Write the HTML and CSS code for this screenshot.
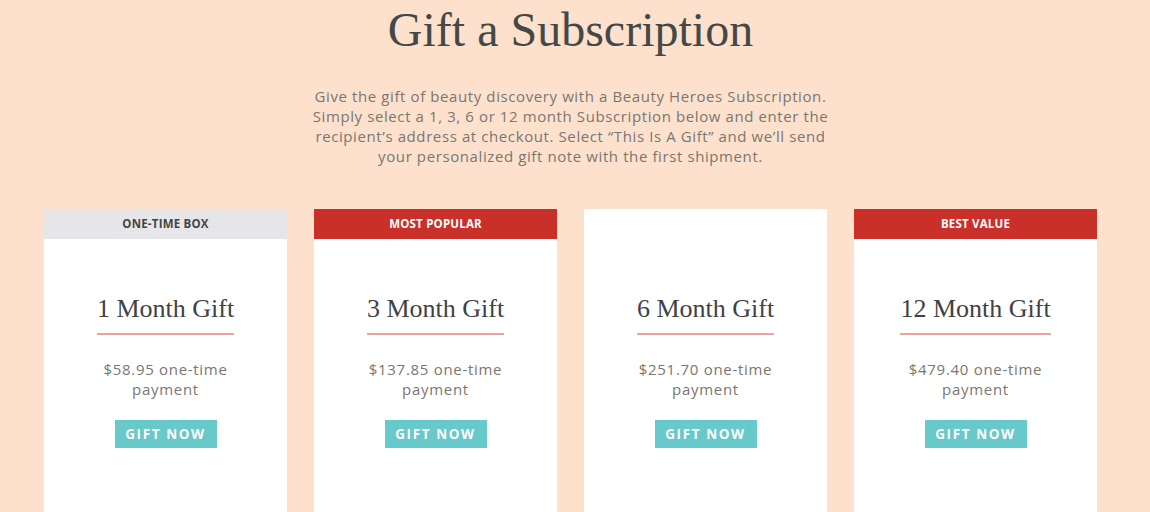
FILE: index.html
```html
<!DOCTYPE html>
<html lang="en">
<head>
<meta charset="UTF-8">
<title>Gift a Subscription</title>
<link rel="stylesheet" href="styles.css">
</head>
<body>
<div class="page">
  <h1 class="title">Gift a Subscription</h1>
  <p class="intro">Give the gift of beauty discovery with a Beauty Heroes Subscription. Simply select a 1, 3, 6 or 12 month Subscription below and enter the recipient’s address at checkout. Select “This Is A Gift” and we’ll send your personalized gift note with the first shipment.</p>

  <div class="plans">
    <div class="plan">
      <div class="tag tag-grey">ONE-TIME BOX</div>
      <div class="plan-body">
        <h3 class="plan-name">1 Month Gift</h3>
        <p class="price">$58.95 one-time payment</p>
        <a class="btn" href="#">GIFT NOW</a>
      </div>
    </div>
    <div class="plan">
      <div class="tag tag-red">MOST POPULAR</div>
      <div class="plan-body">
        <h3 class="plan-name">3 Month Gift</h3>
        <p class="price">$137.85 one-time payment</p>
        <a class="btn" href="#">GIFT NOW</a>
      </div>
    </div>
    <div class="plan">
      <div class="tag tag-none"></div>
      <div class="plan-body">
        <h3 class="plan-name">6 Month Gift</h3>
        <p class="price">$251.70 one-time payment</p>
        <a class="btn" href="#">GIFT NOW</a>
      </div>
    </div>
    <div class="plan">
      <div class="tag tag-red">BEST VALUE</div>
      <div class="plan-body">
        <h3 class="plan-name">12 Month Gift</h3>
        <p class="price">$479.40 one-time payment</p>
        <a class="btn" href="#">GIFT NOW</a>
      </div>
    </div>
  </div>
</div>
</body>
</html>
```

FILE: styles.css
```css
body { margin: 0; background-color: #fde1cc; font-family: "Open Sans", Arial, sans-serif; overflow: hidden; }
.page { width: 1053px; margin-left: 44px; display: flex; flex-direction: column; align-items: center; }
.title { font-family: "Liberation Serif", "Times New Roman", serif; font-weight: normal; font-size: 48px; color: #444846; margin: 1px 0 0; line-height: 58px; }
.intro { width: 530px; margin: 27px 0 0; text-align: center; font-size: 15px; line-height: 20px; color: #7a7672; letter-spacing: 0.6px; }

.plans { display: grid; grid-template-columns: repeat(4, 243px); gap: 27px; margin-top: 43px; }
.plan { background-color: #fff; height: 320px; }
.tag { height: 30px; line-height: 30px; text-align: center; font-size: 11.5px; font-weight: 700; letter-spacing: 0.2px; }
.tag-grey { background-color: #e6e6e8; color: #444; }
.tag-red { background-color: #c9302a; color: #fff; }
.tag-none { background-color: #fff; }

.plan-body { display: flex; flex-direction: column; align-items: center; padding-top: 54px; }
.plan-name { font-family: "Liberation Serif", "Times New Roman", serif; font-weight: normal; font-size: 26px; color: #3f4244; margin: 0; line-height: 32px; padding-bottom: 8px; border-bottom: 2px solid #eba39c; }
.price { width: 170px; margin: 24px 0 0; text-align: center; font-size: 15px; line-height: 20px; color: #7a7672; letter-spacing: 0.7px; }
.btn { display: block; margin-top: 21px; width: 102px; height: 28px; line-height: 28px; text-align: center; background-color: #68c9cb; color: #fff; font-weight: 700; font-size: 13.5px; letter-spacing: 1.6px; text-decoration: none; }
```
